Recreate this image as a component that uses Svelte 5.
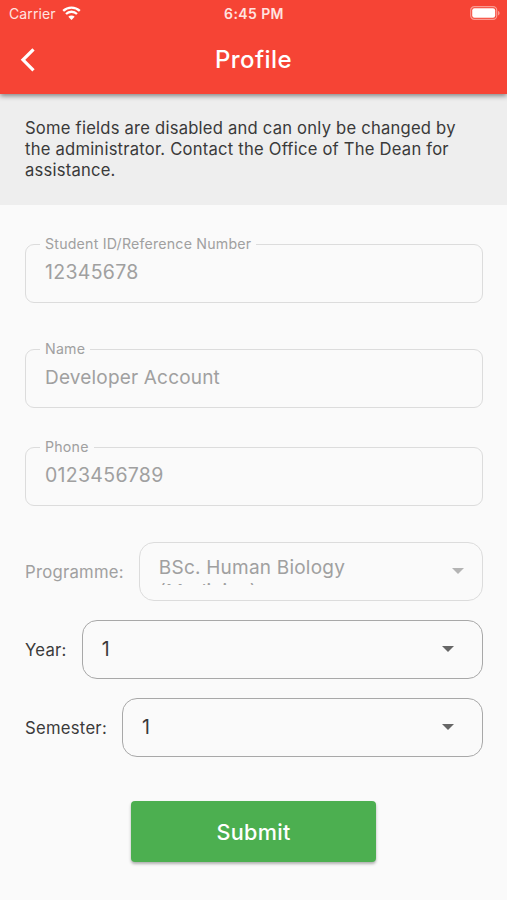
<script lang="ts">
    let fields = [
        { id: "student-id", label: "Student ID/Reference Number", value: "12345678" },
        { id: "name", label: "Name", value: "Developer Account" },
        { id: "phone", label: "Phone", value: "0123456789" },
    ];

    let selects = [
        { id: "programme", label: "Programme:", value: "BSc. Human Biology (Medicine)", disabled: true },
        { id: "year", label: "Year:", value: "1", disabled: false },
        { id: "semester", label: "Semester:", value: "1", disabled: false },
    ];
</script>

<div class="screen">
    <header>
        <div class="status-bar">
            <div class="carrier">
                <span>Carrier</span>
                <svg width="19" height="15" viewBox="0 0 19 15">
                    <path d="M1.2 4.9A11.9 11.9 0 0 1 17.8 4.9" />
                    <path d="M4 8A7.9 7.9 0 0 1 15 8" />
                    <path class="dot" d="M6.3 10.8A4.6 4.6 0 0 1 12.7 10.8L9.5 14Z" />
                </svg>
            </div>
            <span class="time">6:45 PM</span>
            <div class="battery-wrap">
                <svg width="31" height="15" viewBox="0 0 31 15">
                    <rect class="shell" x="0.7" y="0.7" width="26" height="12.6" rx="3.6" />
                    <rect class="level" x="2.2" y="2.2" width="23" height="9.6" rx="2.2" />
                    <path class="tip" d="M28 5v4.4c1-.4 1.6-1.2 1.6-2.2S29 5.4 28 5Z" />
                </svg>
            </div>
        </div>
        <div class="app-bar">
            <button class="back" aria-label="Back">
                <svg width="18" height="26" viewBox="0 0 18 26">
                    <path d="M15.500 2.300L5 12.800L15.500 23.300" />
                </svg>
            </button>
            <h1>Profile</h1>
        </div>
    </header>

    <p class="notice">
        Some fields are disabled and can only be changed by the administrator. Contact the Office of The Dean for assistance.
    </p>

    <form>
        {#each fields as field}
            <fieldset class="field {field.id}">
                <legend>{field.label}</legend>
                <div class="value">{field.value}</div>
            </fieldset>
        {/each}

        {#each selects as select}
            <div class="select-row {select.id}" class:disabled={select.disabled}>
                <span class="select-label">{select.label}</span>
                <div class="select-box">
                    <span class="select-value">{select.value}</span>
                    <svg width="12" height="6" viewBox="0 0 12 6">
                        <path d="M0 0H12L6 6Z" />
                    </svg>
                </div>
            </div>
        {/each}

        <button class="submit" type="button">Submit</button>
    </form>
</div>

<style>
    :global(body) {
        background: #fafafa;
    }

    .screen {
        height: 900px;
        overflow: hidden;
        background: #fafafa;
        color: #3a3a3a;
        font-family: Inter, Roboto, sans-serif;
    }

    header {
        position: relative;
        height: 94px;
        background: #f64435;
        color: #fff;
        box-shadow: 0 2px 5px rgba(0, 0, 0, 0.45);
    }

    .status-bar {
        display: grid;
        grid-template-columns: 1fr auto 1fr;
        align-items: center;
        height: 27px;
        padding: 0 6px 0 9px;
        font-size: 14px;
        color: #ffe3e0;
    }

    .carrier {
        display: flex;
        align-items: center;
        gap: 6px;
        letter-spacing: 0.1px;
    }

    .carrier path {
        fill: none;
        stroke: #fff;
        stroke-width: 2.3;
    }

    .carrier .dot {
        fill: #fff;
        stroke: none;
    }

    .time {
        margin-right: 2px;
        font-size: 14px;
        font-weight: 600;
        letter-spacing: 0.4px;
    }

    .battery-wrap {
        display: flex;
        justify-content: flex-end;
    }

    .shell {
        fill: none;
        stroke: #fa9a92;
        stroke-width: 1.2;
    }

    .level {
        fill: #fff;
    }

    .tip {
        fill: #fa9a92;
    }

    .app-bar {
        display: grid;
        grid-template-columns: 1fr auto 1fr;
        align-items: center;
        height: 65px;
        padding: 0 18px;
    }

    .back {
        display: flex;
        justify-self: start;
        padding: 0;
        border: none;
        background: none;
    }

    .back path {
        fill: none;
        stroke: #fff;
        stroke-width: 3.2;
    }

    h1 {
        margin: 0;
        font-size: 24px;
        font-weight: 500;
        letter-spacing: 0.4px;
    }

    .notice {
        box-sizing: border-box;
        height: 111px;
        margin: 0;
        padding: 24px 25px 0;
        background: #eee;
        font-size: 16.6px;
        line-height: 20.8px;
        letter-spacing: 0.22px;
    }

    form {
        display: flex;
        flex-direction: column;
        padding: 31px 24px 0 25px;
    }

    .field {
        box-sizing: border-box;
        height: 67px;
        min-width: 0;
        margin: 0 0 38px;
        padding: 0 14px;
        border: 1px solid #dcdcdc;
        border-radius: 9px;
        color: #a0a0a0;
    }

    .field.name {
        margin-bottom: 31px;
    }

    .field.phone {
        margin-bottom: 36px;
    }

    legend {
        padding: 0 5px;
        font-size: 14.2px;
        line-height: 16px;
        letter-spacing: 0.2px;
    }

    .value {
        padding: 8px 5px 0;
        font-size: 19.5px;
        line-height: 25px;
        letter-spacing: 0.3px;
    }

    .name .value {
        font-size: 19px;
        letter-spacing: 0.18px;
    }

    .select-row {
        display: flex;
        align-items: center;
        gap: 15px;
        margin-bottom: 19px;
    }

    .select-label {
        font-size: 16.7px;
        letter-spacing: 0.25px;
    }

    .select-box {
        box-sizing: border-box;
        display: flex;
        flex: 1;
        align-items: center;
        justify-content: space-between;
        height: 59px;
        padding: 0 28px 2px 19px;
        border: 1.5px solid #a8a8a8;
        border-radius: 15px;
    }

    .select-value {
        max-width: 240px;
        height: 29px;
        overflow: hidden;
        font-size: 19.5px;
        line-height: 30px;
        letter-spacing: 0.3px;
    }

    .select-box path {
        fill: #666;
    }

    .disabled {
        color: #a0a0a0;
    }

    .disabled .select-box {
        padding-right: 18px;
        border-color: #dcdcdc;
    }

    /* two lines of text in a one-line box, the second is clipped */
    .disabled .select-value {
        font-size: 19px;
        line-height: 23.6px;
        letter-spacing: 0.22px;
    }

    .disabled path {
        fill: #b4b4b4;
    }

    .submit {
        align-self: center;
        width: 245px;
        height: 61px;
        margin: 25px 1px 0 0;
        border: none;
        border-radius: 4px;
        background: #4caf50;
        color: #fff;
        font-family: inherit;
        font-size: 21.6px;
        font-weight: 500;
        letter-spacing: 0.3px;
        box-shadow: 0 2px 3px rgba(0, 0, 0, 0.3);
    }
</style>
